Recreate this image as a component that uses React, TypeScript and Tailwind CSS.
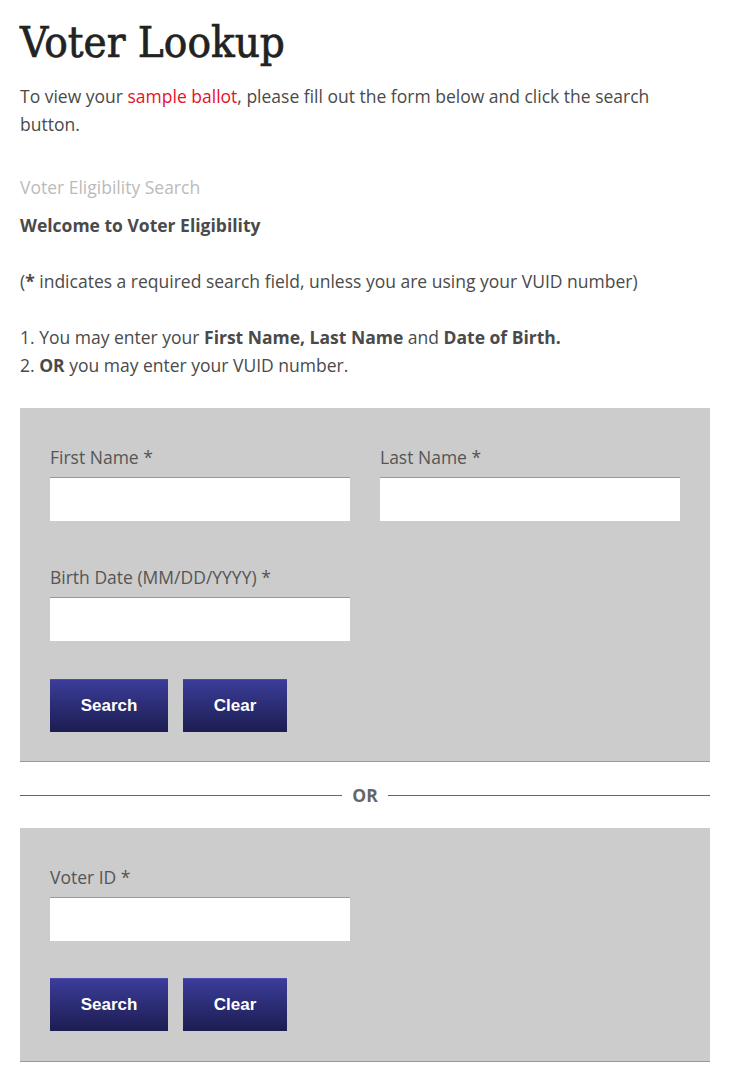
import React from "react";

const Field = ({ label }: { label: string }) => (
  <div className="flex w-[300px] flex-col">
    <label className="mb-[7px] text-[17.5px] leading-[26px] text-[#555]">{label}</label>
    <input
      type="text"
      className="h-[44px] w-[300px] border-t border-[#999] bg-white outline-none"
    />
  </div>
);

const Buttons = () => (
  <div className="flex gap-[15px]">
    <button className="h-[53px] w-[118px] border-t border-[#4a4cb0] bg-gradient-to-b from-[#3b3d9a] to-[#1d1d52] text-[17px] font-bold text-white [font-family:'Liberation_Sans',Arial,sans-serif]">
      Search
    </button>
    <button className="h-[53px] w-[104px] border-t border-[#4a4cb0] bg-gradient-to-b from-[#3b3d9a] to-[#1d1d52] text-[17px] font-bold text-white [font-family:'Liberation_Sans',Arial,sans-serif]">
      Clear
    </button>
  </div>
);

export default function App() {
  return (
    <div className="min-h-[1076px] bg-white px-[20px] pt-[14px] text-[17.5px] leading-[28px] text-[#4a4a4a] [font-family:'Open_Sans',sans-serif]">
      <h1 className="text-[43.5px] leading-[56px] font-normal text-[#222] [-webkit-text-stroke:0.7px_#222] [font-family:'DejaVu_Serif_Condensed','DejaVu_Serif',serif]">
        Voter Lookup
      </h1>
      <p className="mt-[12px] pr-[40px]">
        To view your <span className="text-[#e8102a]">sample ballot</span>, please fill out the form below and click the search button.
      </p>

      <p className="mt-[35px] text-[#bbb]">Voter Eligibility Search</p>
      <p className="mt-[10px] font-bold">Welcome to Voter Eligibility</p>
      <p className="mt-[28px]">
        (<b>*</b> indicates a required search field, unless you are using your VUID number)
      </p>
      <p className="mt-[28px]">
        1. You may enter your <b>First Name, Last Name</b> and <b>Date of Birth.</b>
      </p>
      <p>
        2. <b>OR</b> you may enter your VUID number.
      </p>

      <div className="mt-[29px] border-b border-[#999] bg-[#ccc] px-[30px] pt-[36px] pb-[29px]">
        <div className="flex gap-[30px]">
          <Field label="First Name *" />
          <Field label="Last Name *" />
        </div>
        <div className="mt-[43px]">
          <Field label="Birth Date (MM/DD/YYYY) *" />
        </div>
        <div className="mt-[38px]">
          <Buttons />
        </div>
      </div>

      <div className="mt-[19px] flex items-center gap-[10px]">
        <div className="h-px flex-1 bg-[#666]" />
        <span className="font-bold text-[#666]">OR</span>
        <div className="h-px flex-1 bg-[#666]" />
      </div>

      <div className="mt-[19px] border-b border-[#999] bg-[#ccc] px-[30px] pt-[36px] pb-[30px]">
        <Field label="Voter ID *" />
        <div className="mt-[37px]">
          <Buttons />
        </div>
      </div>
    </div>
  );
}
